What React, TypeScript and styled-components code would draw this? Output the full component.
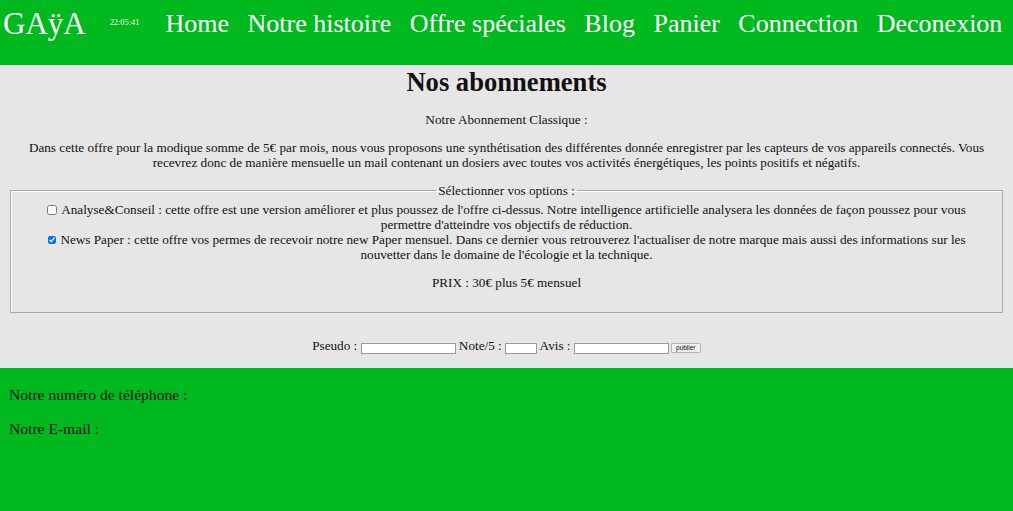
import React from "react";
import styled, { createGlobalStyle } from "styled-components";

const GREEN = "#00b91f";

const Global = createGlobalStyle`
  html, body { margin: 0; padding: 0; }
  body {
    font-family: "Liberation Serif", "Times New Roman", serif;
    background: ${GREEN};
    color: #111;
  }
`;

const Header = styled.header`
  background: ${GREEN};
  height: 65px;
  box-sizing: border-box;
  padding: 0 0 18px 3px;
`;

const HeaderRow = styled.div`
  height: 47px;
  display: flex;
  align-items: center;
`;

const Logo = styled.div`
  font-size: 31px;
  color: #fff;
  white-space: nowrap;
`;

const Clock = styled.div`
  font-size: 8.4px;
  color: #fafae0;
  margin-left: 24px;
  margin-top: -3px;
`;

const Nav = styled.nav`
  display: flex;
  gap: 18.5px;
  margin-left: 26px;
`;

const NavLink = styled.a`
  font-size: 26px;
  color: #fff;
  text-decoration: none;
  white-space: nowrap;
`;

const Main = styled.main`
  background: #e6e6e6;
  padding: 0 8px;
  font-size: 13.2px;
  line-height: 15px;
  text-align: center;
  overflow: hidden;
`;

const Title = styled.h1`
  font-size: 26.6px;
  line-height: 30px;
  font-weight: bold;
  margin: 2px 0 15px;
`;

const Para = styled.p`
  margin: 13px 0;
`;

const Options = styled.fieldset`
  margin: 0 2px;
  padding: 4px 10px 9px;
  border: 1px solid #a8a8a8;
  box-shadow: inset 1px 1px 0 #fff;
`;

const Legend = styled.legend`
  padding: 0 2px;
  margin: 0 auto;
`;

const Option = styled.div`
  line-height: 15px;
`;

const Check = styled.input<{ $size: number }>`
  width: ${(p) => p.$size}px;
  height: ${(p) => p.$size}px;
  margin: 0 4px 0 ${(p) => (p.$size > 9 ? 0 : 1)}px;
  vertical-align: ${(p) => (p.$size > 9 ? "-1px" : "0px")};
`;

const ReviewForm = styled.form`
  margin: 25px 0 0;
  padding-bottom: 14px;
  line-height: 15px;
`;

const Field = styled.input<{ $w: number }>`
  width: ${(p) => p.$w}px;
  height: 11px;
  box-sizing: border-box;
  border: 1px solid #9a9a9a;
  background: #fff;
  padding: 0;
  margin: 0;
  font-size: 7px;
  vertical-align: -1px;
`;

const Publish = styled.button`
  height: 10px;
  width: 30px;
  box-sizing: border-box;
  padding: 0;
  margin: 0 0 0 2px;
  border: 1px solid #b5b5b5;
  border-radius: 1px;
  background: #efefef;
  font-family: "Liberation Sans", Arial, sans-serif;
  font-size: 6.5px;
  line-height: 8px;
  color: #111;
  vertical-align: 0px;
`;

const Footer = styled.footer`
  background: ${GREEN};
  padding: 2px 9px 40px;
  font-size: 15.6px;
  color: #111;
`;

const FootLine = styled.p`
  margin: 16px 0;
`;

const links = [
  "Home",
  "Notre histoire",
  "Offre spéciales",
  "Blog",
  "Panier",
  "Connection",
  "Deconexion",
];

export default function App() {
  return (
    <>
      <Global />
      <Header>
        <HeaderRow>
          <Logo>GAÿA</Logo>
          <Clock>22:05:41</Clock>
          <Nav>
            {links.map((l) => (
              <NavLink key={l} href="#">
                {l}
              </NavLink>
            ))}
          </Nav>
        </HeaderRow>
      </Header>
      <Main>
        <Title>Nos abonnements</Title>
        <Para>Notre Abonnement Classique :</Para>
        <Para>
          Dans cette offre pour la modique somme de 5€ par mois, nous vous
          proposons une synthétisation des différentes donnée enregistrer par
          les capteurs de vos appareils connectés. Vous recevrez donc de
          manière mensuelle un mail contenant un dosiers avec toutes vos
          activités énergétiques, les points positifs et négatifs.
        </Para>
        <Options>
          <Legend>Sélectionner vos options :</Legend>
          <Option>
            <Check type="checkbox" $size={10} readOnly />
            Analyse&amp;Conseil : cette offre est une version améliorer et plus
            poussez de l'offre ci-dessus. Notre intelligence artificielle
            analysera les données de façon poussez pour vous permettre
            d'atteindre vos objectifs de réduction.
          </Option>
          <Option>
            <Check type="checkbox" $size={8} checked readOnly />
            News Paper : cette offre vos permes de recevoir notre new Paper
            mensuel. Dans ce dernier vous retrouverez l'actualiser de notre
            marque mais aussi des informations sur les nouvetter dans le
            domaine de l'écologie et la technique.
          </Option>
          <Para>PRIX : 30€ plus 5€ mensuel</Para>
        </Options>
        <ReviewForm onSubmit={(e) => e.preventDefault()}>
          Pseudo : <Field $w={95} /> Note/5 : <Field $w={32} /> Avis :{" "}
          <Field $w={95} />
          <Publish type="submit">publier</Publish>
        </ReviewForm>
      </Main>
      <Footer>
        <FootLine>Notre numéro de téléphone :</FootLine>
        <FootLine>Notre E-mail :</FootLine>
      </Footer>
    </>
  );
}
